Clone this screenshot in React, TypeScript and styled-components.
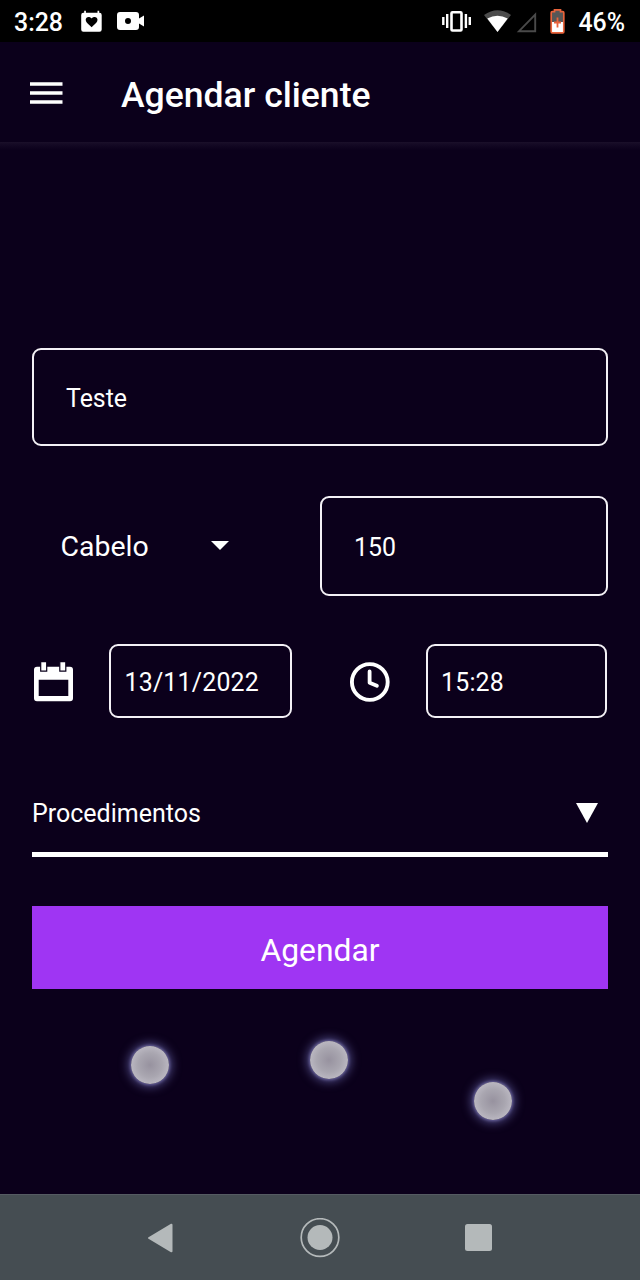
import React from 'react';
import styled, { createGlobalStyle } from 'styled-components';

const Global = createGlobalStyle`
  *, *::before, *::after { box-sizing: border-box; }
  body { margin: 0; background: #0b001b; }
  svg { display: block; flex: none; }
`;

const Screen = styled.div`
  position: relative;
  display: flex;
  flex-direction: column;
  width: 640px;
  height: 1280px;
  overflow: hidden;
  background: #0b001b;
  color: #fff;
  font-family: Roboto, sans-serif;
`;

const StatusBar = styled.div`
  display: flex;
  align-items: center;
  justify-content: space-between;
  height: 42px;
  padding: 0 15px 0 14px;
  background: #000;
`;

const StatusGroup = styled.div<{ $gap: number }>`
  display: flex;
  align-items: center;
  gap: ${(p) => p.$gap}px;

  svg + svg { margin-left: -2px; }
`;

const StatusText = styled.span`
  height: 42px;
  padding-top: 2px;
  font-size: 24.9px;
  font-weight: 500;
  line-height: 42px;
`;

const Header = styled.header`
  display: flex;
  align-items: center;
  gap: 58px;
  height: 100px;
  padding: 2px 0 0 30px;
`;

const Title = styled.h1`
  margin: 0;
  padding-top: 3px;
  font-size: 35.56px;
  font-weight: 500;
  line-height: 42px;
`;

const HeaderShadow = styled.div`
  height: 8px;
  background: linear-gradient(#1b102a, #150a25 25%, #0b001b);
`;

const Form = styled.main`
  display: flex;
  flex: 1;
  flex-direction: column;
  padding: 198px 32px 0;
`;

const Row = styled.div<{ $top: number }>`
  display: flex;
  align-items: center;
  margin-top: ${(p) => p.$top}px;
`;

const Field = styled.div<{ $w: number; $h: number; $pad: number; $spacing?: number }>`
  display: flex;
  flex: none;
  align-items: center;
  width: ${(p) => p.$w}px;
  height: ${(p) => p.$h}px;
  padding: 3px 0 0 ${(p) => p.$pad}px;
  border: 2px solid #f4f1f6;
  border-radius: 9px;
  font-size: 24.9px;
  letter-spacing: ${(p) => p.$spacing ?? 0}px;
  line-height: 30px;
`;

const Picker = styled.div`
  display: flex;
  align-items: center;
  justify-content: space-between;
  width: 288px;
  padding: 0 91px 0 28.5px;
  font-size: 28.44px;
  line-height: 36px;

  span { padding-top: 1px; }
  svg { margin-bottom: 2px; }
`;

const IconSlot = styled.div<{ $w: number; $left?: number }>`
  flex: none;
  width: ${(p) => p.$w}px;
  margin-left: ${(p) => p.$left ?? 0}px;
  padding-top: 2px;
`;

const Accordion = styled.div`
  display: flex;
  align-items: center;
  justify-content: space-between;
  height: 87px;
  margin-top: 52px;
  padding: 4px 10px 0 0;
  border-bottom: 5px solid #fff;
  font-size: 25px;
`;

const Submit = styled.button`
  height: 83px;
  margin-top: 49px;
  padding: 4px 0 0;
  border: 0;
  background: #9f35f3;
  color: #fff;
  font: 400 31.8px Roboto, sans-serif;
`;

const NavBar = styled.nav`
  display: flex;
  align-items: center;
  justify-content: space-between;
  height: 86px;
  padding: 0 148px 0 147px;
  border-top: 1px solid #555b62;
  background: #454d52;
`;

const Touch = styled.div<{ $x: number; $y: number }>`
  position: absolute;
  left: ${(p) => p.$x - 19}px;
  top: ${(p) => p.$y - 19}px;
  width: 38px;
  height: 38px;
  border-radius: 50%;
  background: radial-gradient(circle, #97929f 0%, #a9a6b0 45%, #bbb8c2 72%);
  box-shadow: 0 0 3px 1px #6a649c, 0 0 8px 4px #403a6c;
`;

const HeartCalendar = () => (
  <svg width="22" height="22" viewBox="-0.7 -0.7 22 22">
    <path fill="#fff" fillRule="evenodd" d="M3.500 0h1.700v2h11.600V0h1.700v2h.3Q21 2 21 4.200V18.800Q21 21 18.800 21H2.700Q.5 21 .5 18.800V4.200Q.5 2 2.700 2h.8zM10.900 16.500l-1-.9C6.600 12.700 5 11.200 5 9.100 5 7.500 6.300 6.200 7.900 6.200c1.100 0 2.300.5 3 1.500.7-1 1.900-1.500 3-1.500 1.600 0 2.900 1.300 2.900 2.900 0 2.100-1.600 3.600-4.900 6.500z" />
  </svg>
);

const Camera = () => (
  <svg width="28" height="20" viewBox="0 0 28 20">
    <path fill="#fff" fillRule="evenodd" d="M3 1h16q3 0 3 3v3.500L27 4.500v11l-5-3V16q0 3-3 3H3q-3 0-3-3V4q0-3 3-3zM11 7a3 3 0 1 0 0 6a3 3 0 0 0 0-6z" />
  </svg>
);

const StatusIcons = () => (
  <svg width="128" height="42" viewBox="0 0 128 42">
    <g fill="none" stroke="#fff">
      <rect x="9.500" y="12.300" width="10" height="18.200" rx="1" strokeWidth="2.600" />
      <path strokeWidth="2.400" d="M5.200 14v14M1.300 17v8M23.900 14v14M27.800 17v8" />
    </g>
    <path fill="#4c4c4c" d="M42 15Q55.500 5.300 69 15L55.500 32z" />
    <path fill="#fff" d="M45.300 18.500Q55.500 12.800 65.700 18.500L55.500 32z" />
    <path fill="none" stroke="#4a4a4a" strokeWidth="1.900" d="M93.200 14.500v16.700H77z" />
    <path fill="#575757" d="M110 11h3V9.800h5V11h3.500v11H110z" />
    <path fill="#fff" d="M109 22h12.500v10.500H109z" />
    <path fill="none" stroke="#e9633b" strokeWidth="1.700" d="M110.200 11.700h2.300V9.800h6v1.900h2.300q1 0 1 1v19.100q0 1-1 1h-10.600q-1 0-1-1V12.700q0-1 1-1z" />
    <path fill="none" stroke="#e9633b" strokeWidth="1.800" d="M115.500 17.500v10M112 22.500h7" />
  </svg>
);

const MenuIcon = () => (
  <svg width="33" height="22" viewBox="0 0 33 22">
    <path stroke="#fff" strokeWidth="3.700" d="M0 2h32.500M0 11h32.500M0 20h32.500" />
  </svg>
);

const CalendarIcon = () => (
  <svg width="42" height="42" viewBox="32 661 42 42">
    <path fill="#fff" fillRule="evenodd" d="M37 666.700h33q3 0 3 3v28.600q0 3-3 3H37q-3 0-3-3v-28.600q0-3 3-3zM38.700 679.700V696h29.600v-16.300z" />
    <path fill="#fff" stroke="#0b001b" strokeWidth="1.200" d="M40.700 661.600h6v9.600h-6zM59.800 661.600h6v9.600h-6z" />
  </svg>
);

const ClockIcon = () => (
  <svg width="42" height="42" viewBox="349 661 42 42">
    <circle cx="369.800" cy="682" r="17.900" fill="none" stroke="#fff" strokeWidth="3.900" />
    <path fill="none" stroke="#fff" strokeWidth="3.800" strokeLinecap="round" strokeLinejoin="round" d="M369.600 671.500v11.200l7.300 3" />
  </svg>
);

export default function App() {
  return (
    <>
      <Global />
      <Screen>
        <StatusBar>
          <StatusGroup $gap={17}>
            <StatusText>3:28</StatusText>
            <HeartCalendar />
            <Camera />
          </StatusGroup>
          <StatusGroup $gap={8}>
            <StatusIcons />
            <StatusText>46%</StatusText>
          </StatusGroup>
        </StatusBar>
        <Header>
          <MenuIcon />
          <Title>Agendar cliente</Title>
        </Header>
        <HeaderShadow />
        <Form>
          <Field $w={576} $h={98} $pad={32}>Teste</Field>
          <Row $top={50}>
            <Picker>
              <span>Cabelo</span>
              <svg width="18" height="9" viewBox="0 0 18 9">
                <path fill="#fff" d="M0 0h18L9 9z" />
              </svg>
            </Picker>
            <Field $w={288} $h={100} $pad={32}>150</Field>
          </Row>
          <Row $top={48}>
            <IconSlot $w={77}><CalendarIcon /></IconSlot>
            <Field $w={183} $h={74} $pad={13.5} $spacing={0.2}>13/11/2022</Field>
            <IconSlot $w={77} $left={57}><ClockIcon /></IconSlot>
            <Field $w={181} $h={74} $pad={13} $spacing={0.2}>15:28</Field>
          </Row>
          <Accordion>
            <span>Procedimentos</span>
            <svg width="22" height="20" viewBox="0 0 22 20">
              <path fill="#fff" d="M0 0h22L11 20z" />
            </svg>
          </Accordion>
          <Submit>Agendar</Submit>
        </Form>
        <NavBar>
          <svg width="26" height="30" viewBox="0 0 26 30">
            <path fill="#b4b9ba" stroke="#b4b9ba" strokeWidth="2" strokeLinejoin="round" d="M24.500 1.700v26.600L2 15z" />
          </svg>
          <svg width="42" height="40" viewBox="-2 0.5 42 40">
            <circle cx="20" cy="20" r="18.800" fill="none" stroke="#b4b9ba" strokeWidth="1.700" />
            <circle cx="20" cy="20" r="12.500" fill="#b4b9ba" />
          </svg>
          <svg width="27" height="27" viewBox="0 0 27 27">
            <rect width="27" height="27" rx="2.500" fill="#b4b9ba" />
          </svg>
        </NavBar>
        <Touch $x={150} $y={1065} />
        <Touch $x={328.5} $y={1060} />
        <Touch $x={493} $y={1101} />
      </Screen>
    </>
  );
}
